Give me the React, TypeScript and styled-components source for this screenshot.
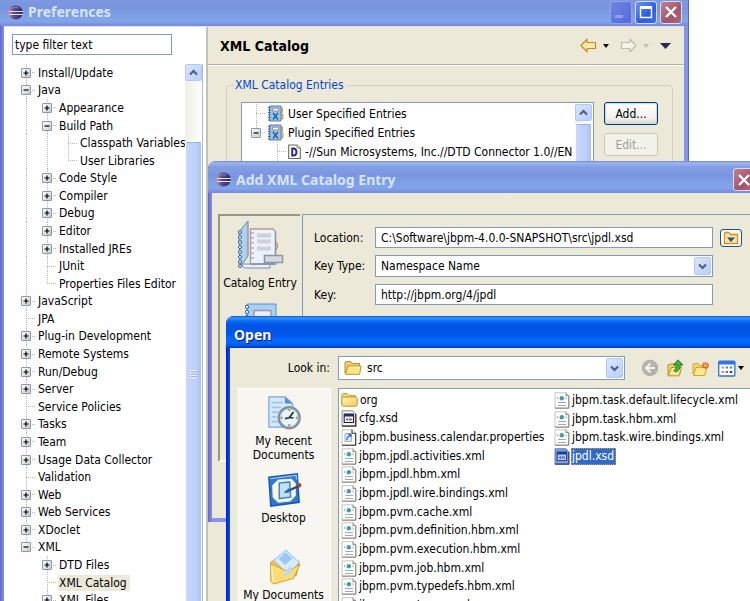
import React from "react";
import styled, { createGlobalStyle, css } from "styled-components";

const face = "#ece9d8";
const edge = "#7f9db9";
const dots = "#bdb8a6";
const uiFont = `"DejaVu Sans Condensed", "Noto Sans", sans-serif`;
const titleFont = `"Noto Sans", "Open Sans", sans-serif`;

const GlobalStyle = createGlobalStyle`
  *, *::before, *::after { box-sizing: border-box; }
  body { margin: 0; background: #fff; overflow: hidden; }
  body, button, input, select { font: 12px/16px ${uiFont}; color: #000; }
  h1, h2, ul, fieldset { margin: 0; padding: 0; }
  ul { list-style: none; }
  button { padding: 0; border: 0; background: none; }
  svg { display: block; flex: none; }
`;

/* ---------- window chrome ---------- */

const Desktop = styled.div`
  position: relative;
  height: 100vh;
  overflow: hidden;
`;

const Window = styled.section<{ $active?: boolean }>`
  position: absolute;
  display: flex;
  flex-direction: column;
  border-radius: 8px 8px 0 0;
  overflow: hidden;
  background: ${(p) =>
    p.$active
      ? "linear-gradient(90deg, #0019cf, #0855dd 4px)"
      : "linear-gradient(90deg, #5f68cc, #8494e6 4px)"};
`;

const PreferencesFrame = styled(Window)`
  inset: 0 61px -8px 0;
  padding: 0 4px 0 4px;
  border-radius: 0;
  border-right: 1px solid #5a62c4;
`;

const EntryFrame = styled(Window)`
  inset: 161px -13px 79px 208px;
  padding: 0 4px 4px;
`;

const OpenFrame = styled(Window)`
  inset: 316px -60px -120px 226px;
  padding: 0 4px 4px;
`;

const TitleBar = styled.header<{ $active?: boolean; $cut?: boolean }>`
  display: flex;
  align-items: center;
  gap: 5px;
  flex: none;
  height: ${(p) => (p.$cut ? 26 : 32)}px;
  margin: 0 -4px;
  padding: ${(p) => (p.$cut ? "0 6px 2px 8px" : "5px 8px 0 8px")};
  background: ${(p) =>
    p.$active
      ? "linear-gradient(#0058e0, #3c95ff 2px, #0a6cf4 5px, #0053e4 9px, #0056ea 18px, #0068ff 24px, #0066fc 28px, #0038c4)"
      : p.$cut
        ? "linear-gradient(#7e97e0, #7a95df 8px, #82a6ea 21px, #7f9ae5 23px, #7788da)"
        : "linear-gradient(#7287da, #9cb6ec 2px, #829fe4 6px, #7a95df 14px, #82a6ea 27px, #7f9ae5 29px, #7788da)"};
`;

const WindowTitle = styled.h1<{ $active?: boolean }>`
  flex: 1;
  font: bold 14px/20px ${titleFont};
  color: ${(p) => (p.$active ? "#fff" : "#d8e4f8")};
  text-shadow: ${(p) => (p.$active ? "1px 1px 0 #0f1089" : "none")};
`;

const CaptionButtons = styled.div`
  display: flex;
  gap: 3px;
`;

const captionFill = {
  min: "linear-gradient(135deg, #6f86e2, #5468d8)",
  max: "linear-gradient(135deg, #6c95f0, #2d5be0 60%, #3f72ee)",
  close: "linear-gradient(135deg, #bf8390, #a4556a 60%, #b0687a)",
};

const CaptionButton = styled.button<{ $kind: keyof typeof captionFill }>`
  width: 22px;
  height: 23px;
  border: 1px solid ${(p) => (p.$kind === "min" ? "#8ea2ea" : "#d2dcf8")};
  border-radius: 3px;
  background: ${(p) => captionFill[p.$kind]};
  svg { margin: auto; }
`;

/* ---------- shared controls ---------- */

const TextField = styled.input`
  display: block;
  width: 100%;
  height: 21px;
  padding: 0 5px;
  border: 1px solid ${edge};
  background: #fff;
  outline: 0;
`;

const Combo = styled.div<{ $tall?: boolean }>`
  display: flex;
  align-items: center;
  gap: 5px;
  height: ${(p) => (p.$tall ? 24 : 22)}px;
  padding: 1px 1px 1px 5px;
  border: 1px solid ${edge};
  background: #fff;
`;

const ComboSelect = styled.select`
  flex: 1;
  min-width: 0;
  padding: 0;
  border: 0;
  appearance: none;
  background: none;
  outline: 0;
`;

const xpBlue = css`
  border: 1px solid #b4c8f6;
  border-radius: 2px;
  background: linear-gradient(135deg, #dbe5fd, #bacdfb);
`;

const ComboArrow = styled.span`
  ${xpBlue}
  display: grid;
  place-items: center;
  align-self: stretch;
  width: 17px;
`;

const PushButton = styled.button`
  width: 54px;
  height: 23px;
  border: 1px solid #003c74;
  border-radius: 3px;
  background: linear-gradient(#fff, #f3f2ec 70%, #dcd8cc);
  box-shadow: inset 0 0 1px 1px #c8d8f0;
  &:disabled {
    color: #a1a192;
    border-color: #c9c7ba;
    background: #f3f2ea;
    box-shadow: none;
  }
`;

const ScrollTrack = styled.div`
  display: flex;
  flex-direction: column;
  flex: none;
  gap: 1px;
  width: 17px;
  background: linear-gradient(90deg, #f0efe8, #fdfdfb);
`;

const ScrollButton = styled.button`
  ${xpBlue}
  display: grid;
  place-items: center;
  height: 17px;
  flex: none;
`;

const ScrollThumb = styled.div<{ $offset?: boolean }>`
  display: grid;
  justify-items: center;
  align-content: start;
  flex: 1;
  margin-top: ${(p) => (p.$offset ? 59 : 1)}px;
  padding-top: ${(p) => (p.$offset ? 228 : 0)}px;
  border: 1px solid #fff;
  border-radius: 2px;
  background: linear-gradient(90deg, #c8d8fd, #bccffc 70%, #aabff0);
  box-shadow: inset 0 1px 0 #98b0e8;
`;

/* ---------- preferences ---------- */

const PreferencesBody = styled.div`
  display: grid;
  grid-template-columns: 204px 1fr;
  flex: 1;
  min-height: 0;
  background: ${face};
  border-top: 1px solid #dfe0e8;
`;

const NavPane = styled.nav`
  display: flex;
  flex-direction: column;
  gap: 9px;
  padding: 7px 3px 0 8px;
  min-height: 0;
  background: #fff;
  border-right: 2px solid #c5c2b4;
`;

const FilterBox = styled.div`
  width: 160px;
  input { padding: 0 2px; }
`;

const NavScroller = styled.div`
  display: flex;
  flex: 1;
  min-height: 0;
  border-right: 1px solid #a9bbdc;
`;

const Tree = styled.ul`
  display: grid;
  grid-auto-rows: 1fr;
  flex: 1;
  min-width: 0;
  height: 545px;
  padding-left: 4px;
`;

const TreeRow = styled.li`
  display: flex;
  align-items: center;
  white-space: nowrap;
`;

const Guide = styled.span<{ $kind: string }>`
  display: flex;
  align-items: center;
  align-self: stretch;
  flex: none;
  width: 21px;
  padding-left: 5px;
  background-image: repeating-linear-gradient(${dots} 0 1px, transparent 1px 2px),
    repeating-linear-gradient(90deg, ${dots} 0 1px, transparent 1px 2px);
  background-position: 10px 0, 10px 50%;
  background-repeat: no-repeat;
  background-size: ${({ $kind }) =>
    $kind === "none"
      ? "0 0, 0 0"
      : $kind === "line"
        ? "1px 100%, 0 0"
        : $kind === "end"
          ? "1px 50%, 10px 1px"
          : "1px 100%, 10px 1px"};
`;

const Toggle = styled.button`
  width: 10px;
  height: 10px;
  border: 1px solid #7b9cc0;
  border-radius: 1px;
  background: linear-gradient(135deg, #fff, #cfcabb);
`;

const TreeLabel = styled.span<{ $selected?: boolean }>`
  padding: 0 ${(p) => (p.$selected ? 3 : 0)}px 0 1px;
  background: ${(p) => (p.$selected ? face : "transparent")};
`;

const PrefPage = styled.main`
  min-width: 0;
`;

const PageHeader = styled.header`
  display: flex;
  align-items: center;
  gap: 11px;
  height: 38px;
  padding: 0 13px 0 12px;
  border-bottom: 1px solid #b5b2a2;
  box-shadow: 0 1px 0 #fff;
`;

const PageTitle = styled.h2`
  flex: 1;
  font: bold 14px/18px ${uiFont};
`;

const PageTool = styled.button`
  display: flex;
  align-items: center;
  gap: 6px;
`;

const EntryGroup = styled.fieldset`
  display: flex;
  gap: 10px;
  min-width: 0;
  height: 190px;
  margin: 12px 11px 0 18px;
  padding: 9px 14px 0;
  border: 1px solid #d0d0bf;
  border-radius: 4px;
  legend {
    margin-left: -7px;
    padding: 0 3px 0 1px;
    color: #0046d5;
  }
`;

const EntryList = styled.div`
  display: flex;
  flex: 1;
  min-width: 0;
  padding: 1px;
  border: 1px solid ${edge};
  background: #fff;
`;

const EntryRows = styled.ul`
  flex: 1;
  min-width: 0;
  overflow: hidden;
  padding-left: 3px;
`;

const EntryRow = styled(TreeRow)`
  height: 19px;
  svg { margin-right: 4px; }
  button svg { margin-right: 0; }
`;

const ButtonStack = styled.div`
  display: flex;
  flex-direction: column;
  gap: 8px;
`;

/* ---------- add entry dialog ---------- */

const EntryBody = styled.div`
  display: grid;
  grid-template-columns: 84px 1fr;
  flex: 1;
  padding: 21px 0 56px 6px;
  background: ${face};
`;

const KindBar = styled.div`
  display: flex;
  flex-direction: column;
  align-items: center;
  gap: 12px;
  padding-top: 4px;
  margin-right: 2px;
  border: 2px solid #9a9786;
  border-right: 0;
  border-bottom-color: #fff;
`;

const KindButton = styled.button`
  display: flex;
  flex-direction: column;
  align-items: center;
  gap: 5px;
  white-space: nowrap;
`;

const EntryForm = styled.form`
  display: grid;
  grid-template-columns: 54px minmax(0, 1fr) 39px;
  grid-template-rows: 21px 22px 21px;
  align-content: start;
  align-items: center;
  gap: 7px;
  padding: 12px 0 0 11px;
  border: 1px solid ${edge};
  border-right: 0;
  label { white-space: nowrap; }
`;

const BrowseButton = styled.button`
  display: grid;
  place-items: center;
  width: 22px;
  height: 18px;
  border: 1px solid #1d5281;
  border-radius: 3px;
  background: #fbf8ee;
`;

/* ---------- open dialog ---------- */

const OpenBody = styled.div`
  flex: 1;
  background: ${face};
  padding: 8px 0 0 7px;
`;

const LookRow = styled.div`
  display: grid;
  grid-template-columns: 93px minmax(0, 287px) auto;
  align-items: center;
  gap: 8px;
  label { text-align: right; }
`;

const LookTools = styled.div`
  display: flex;
  align-items: center;
  gap: 8px;
  padding-left: 8px;
`;

const ViewButton = styled.button`
  display: flex;
  align-items: center;
  gap: 2px;
`;

const OpenColumns = styled.div`
  display: grid;
  grid-template-columns: 94px 1fr;
  gap: 7px;
  height: 300px;
  margin-top: 8px;
`;

const Places = styled.nav`
  display: flex;
  flex-direction: column;
  align-items: center;
  gap: 9px;
  padding-top: 5px;
  border-top: 1px solid #fff;
  border-right: 1px solid #fff;
  background: #f7f6f1;
`;

const Place = styled.button`
  display: flex;
  flex-direction: column;
  align-items: center;
  gap: 2px;
  width: 86px;
  min-height: 68px;
  line-height: 14px;
`;

const FileArea = styled.div`
  display: grid;
  grid-template-columns: 213px 1fr;
  align-items: start;
  padding: 2px;
  border: 1px solid ${edge};
  background: #fff;
`;

const FileColumn = styled.ul<{ $rows: number }>`
  display: grid;
  grid-auto-rows: 1fr;
  height: ${(p) => Math.round(p.$rows * 18.7)}px;
`;

const FileRow = styled.li<{ $selected?: boolean }>`
  display: flex;
  align-items: center;
  gap: 1px;
  white-space: nowrap;
  span {
    padding: 0 2px 0 1px;
    line-height: 17px;
    color: ${(p) => (p.$selected ? "#fff" : "#000")};
    background: ${(p) => (p.$selected ? "#316ac5" : "transparent")};
    outline: ${(p) => (p.$selected ? "1px dotted #d79a4a" : "0")};
    outline-offset: -1px;
  }
`;

/* ---------- icons ---------- */

const Chevron = ({ up }: { up?: boolean }) => (
  <svg width="9" height="7" viewBox="0 0 9 7">
    <path d={up ? "M1 5.5 4.5 2 8 5.5" : "M1 1.5 4.5 5 8 1.5"} fill="none" stroke="#4d6185" strokeWidth="2.2" />
  </svg>
);

const Caret = ({ color = "#000", wide }: { color?: string; wide?: boolean }) => (
  <svg width={wide ? 11 : 6} height={wide ? 6 : 4} viewBox="0 0 6 4" preserveAspectRatio="none">
    <path d="M0 0H6L3 4Z" fill={color} />
  </svg>
);

const EclipseIcon = () => (
  <svg width="15" height="15" viewBox="0 0 15 15">
    <defs>
      <linearGradient id="ecl" x1="0" x2="1">
        <stop offset="0" stopColor="#d592a6" />
        <stop offset=".35" stopColor="#5f4f92" />
        <stop offset="1" stopColor="#2b2462" />
      </linearGradient>
    </defs>
    <ellipse cx="7.5" cy="7.5" rx="7.3" ry="7" fill="url(#ecl)" />
    <path d="M1 6.5H15M1 9.5H15" stroke="#dfe3f7" />
    <path d="M4 3.6Q7 1.2 10.5 3" stroke="#9b8cc2" fill="none" />
  </svg>
);

const CrossIcon = () => (
  <svg width="14" height="14" viewBox="0 0 14 14">
    <path d="M2 2 12 12M12 2 2 12" stroke="#fff" strokeWidth="2.4" />
  </svg>
);

const MaxIcon = () => (
  <svg width="14" height="14" viewBox="0 0 14 14">
    <path d="M1.5 2.5H12.5V12.5H1.5Z" fill="none" stroke="#fff" strokeWidth="1.4" />
    <path d="M1 2.5H13" stroke="#fff" strokeWidth="3" />
  </svg>
);

const MinIcon = () => (
  <svg width="14" height="14" viewBox="0 0 14 14">
    <path d="M1 10H9V13H1Z" fill="#93a0ec" />
  </svg>
);

const ArrowIcon = ({ off }: { off?: boolean }) => (
  <svg width="17" height="15" viewBox="0 0 17 15">
    <path
      d={off ? "M16 7.5 10 1.2V4.5H1.5V10.5H10V13.8Z" : "M1 7.5 7 1.2V4.5H15.5V10.5H7V13.8Z"}
      fill={off ? "#f2f1ea" : "#fde9a6"}
      stroke={off ? "#bebdb2" : "#c28a22"}
      strokeWidth="1.2"
      strokeLinejoin="round"
    />
  </svg>
);

const SignIcon = ({ plus }: { plus?: boolean }) => (
  <svg width="8" height="8" viewBox="0 0 8 8">
    <path d={plus ? "M1.5 4H6.5M4 1.5V6.5" : "M1.5 4H6.5"} stroke="#000" strokeWidth="1.2" />
  </svg>
);

const CatalogIcon = () => (
  <svg width="17" height="17" viewBox="0 0 17 17">
    <path d="M13.5 3H15.5V7.5H13.5ZM13.5 9H16V14H13.5Z" fill="#f0c568" stroke="#b08a3c" strokeWidth=".7" />
    <path d="M2.5 1H14V16H2.5Z" fill="#92c5ee" stroke="#5a7fae" />
    <path d="M5.5 3.2H11.8V6H5.5Z" fill="#eef6ff" stroke="#a07f96" strokeWidth=".9" />
    <path d="M6 8 11 14.5M11 8 6 14.5" stroke="#2d5f9b" strokeWidth="1.5" />
    <path d="M1 2.5H3.5M1 5H3.5M1 7.5H3.5M1 10H3.5M1 12.5H3.5M1 15H3.5" stroke="#42618c" />
  </svg>
);

const DtdIcon = () => (
  <svg width="13" height="16" viewBox="0 0 13 16">
    <path d="M.7 1H9L12.3 4V14.5H.7Z" fill="#fffef4" stroke="#6f6a58" strokeWidth="1.1" />
    <path d="M9 1V4H12.3" fill="#f2d98e" stroke="#8d8363" strokeWidth=".8" />
    <path d="M4.2 4.5V11.5H5.5C9.5 11.5 9.5 4.5 5.5 4.5Z" fill="none" stroke="#282a8c" strokeWidth="1.9" />
  </svg>
);

const CatalogEntryIcon = () => (
  <svg width="48" height="50" viewBox="0 0 48 50">
    <path d="M35 20 39 21Q44 25 40 30L35 33Z" fill="#f9c95c" stroke="#b88f54" />
    <path d="M5 44H34V48H8Z" fill="#e9f2fb" stroke="#6a93c2" />
    <path d="M3 12 12 1V36L4 47Z" fill="#a8d4f4" stroke="#6c82a4" />
    <path d="M11.5 3.5V36" stroke="#b99aa8" strokeWidth="1.4" />
    <path d="M14.5 9H37L39.5 11.5V44H14.5Z" fill="#edf1fa" stroke="#b597a8" strokeWidth="1.3" />
    <path d="M39.5 12V44H14.5" fill="none" stroke="#7f93bb" strokeWidth="1.4" />
    <path d="M21 15.5H35M21 21.5H35M21 28.5H35" stroke="#cdd2d9" strokeWidth="4" />
    <path d="M15 13H18M15 18H18M15 23H18M15 28H18M15 33H18M15 38H18" stroke="#7b93b4" />
    <path d="M28.5 35.5H46.5V42.5H28.5Z" fill="#d3dbdf" stroke="#8d97a2" strokeWidth="1.5" />
    {[12, 17, 22, 27, 32, 37, 42, 46].map((y) => (
      <circle key={y} cx="4" cy={y} r="1.6" fill="#dcecfb" stroke="#3f6690" />
    ))}
  </svg>
);

const NextCatalogIcon = () => (
  <svg width="34" height="34" viewBox="0 0 34 34">
    <path d="M4 1H33V33H4Z" fill="#a3d2f5" stroke="#5d8fc0" />
    <path d="M11 7.5H28V20H11Z" fill="#e5f0fb" stroke="#a78fa3" strokeWidth="1.4" />
    {[4, 9, 14, 19, 24, 29].map((y) => (
      <circle key={y} cx="4" cy={y} r="1.7" fill="#dcecfb" stroke="#3f6690" />
    ))}
  </svg>
);

const FolderIcon = () => (
  <svg width="18" height="16" viewBox="0 0 18 16">
    <path d="M1 13V3Q1 1.5 2.5 1.5H6.5L8.3 3.5H15.5V13Z" fill="#f3cd62" stroke="#b98c2b" />
    <path d="M1.4 14.3 4 6H17.2L15.6 14.3Z" fill="#fde58a" stroke="#c0942f" />
    <path d="M5 7.3H15.7" stroke="#fff8cf" />
  </svg>
);

const ClosedFolderIcon = () => (
  <svg width="17" height="16" viewBox="0 0 17 16">
    <defs>
      <linearGradient id="fold" x1="0" y1="0" x2="1" y2="1">
        <stop offset="0" stopColor="#fff6b8" />
        <stop offset="1" stopColor="#f4cb5a" />
      </linearGradient>
    </defs>
    <path d="M.8 12.5V3Q.8 1.5 2.3 1.5H6L7.8 3.5H14.5V7Z" fill="#f6d468" stroke="#d0a23a" />
    <path d="M.8 13V6.5Q.8 5 2.3 5H14.7Q16.2 5 16.2 6.5V12.5Q16.2 14.2 14.7 14.2H2.3Q.8 14.2 .8 13Z" fill="url(#fold)" stroke="#c2912f" />
  </svg>
);

const BrowseIcon = () => (
  <svg width="16" height="14" viewBox="0 0 16 14">
    <path d="M1.5 12.5V3Q1.5 1.5 3 1.5H6L7.5 3.5H14.5V12.5Z" fill="#fbe3a5" stroke="#d1932f" strokeWidth="1.3" />
    <path d="M4 6.5H12L8 11Z" fill="#23597e" />
  </svg>
);

const BackDisc = () => (
  <svg width="18" height="18" viewBox="0 0 18 18">
    <circle cx="9" cy="9" r="8.2" fill="#b4b3ab" />
    <path d="M9.5 4.5 5 9 9.5 13.5M5.5 9H14" fill="none" stroke="#f3f2ec" strokeWidth="2.2" />
  </svg>
);

const UpFolderIcon = () => (
  <svg width="17" height="18" viewBox="0 0 17 18">
    <path d="M1 16V6L6 4.5 7 6H13V15Z" fill="#f1ce62" stroke="#b8902e" />
    <path d="M1.2 16.8 4.5 8.5H14.5L12 16.8Z" fill="#fde88f" stroke="#b8902e" />
    <path d="M8.5 13Q13.8 11 13 6H16L11 .8 6.3 6H9.4Q10 9.5 7 11.5Z" fill="#42b03c" stroke="#1e7625" strokeWidth=".9" />
  </svg>
);

const NewFolderIcon = () => (
  <svg width="18" height="17" viewBox="0 0 18 17">
    <path d="M1 14V5Q1 3.5 2.5 3.5H6L7.5 5.5H13V14Z" fill="#f5d268" stroke="#d3a43c" />
    <path d="M1.5 15.5 4 7.5H15L12.5 15.5Z" fill="#fde88f" stroke="#d3a43c" />
    <path d="M13.5 2V9M10 5.5H17M11 3 16 8M16 3 11 8" stroke="#e8522f" strokeWidth="1.3" />
    <circle cx="13.5" cy="5.5" r="1.6" fill="#ffc44a" />
  </svg>
);

const ViewIcon = () => (
  <svg width="18" height="17" viewBox="0 0 18 17">
    <rect x=".7" y="1.2" width="16.2" height="14.8" rx="1" fill="#fff" stroke="#2f6fd6" strokeWidth="1.3" />
    <path d="M1 2.7H17" stroke="#2f74e8" strokeWidth="3.4" />
    <path d="M3.5 7.5H6M3.5 12H6" stroke="#a39ba8" strokeWidth="2.2" />
    <path d="M7.6 7.5H10.1" stroke="#6d74d8" strokeWidth="2.2" />
    <path d="M7.6 12H10.1" stroke="#d14a38" strokeWidth="2.2" />
    <path d="M11.7 7.5H14.2" stroke="#44a257" strokeWidth="2.2" />
    <path d="M11.7 12H14.2" stroke="#2c3c9c" strokeWidth="2.2" />
  </svg>
);

const XmlFileIcon = () => (
  <svg width="16" height="17" viewBox="0 0 16 17">
    <path d="M1 .8H12L14.8 3.6V16H1Z" fill="#fff" stroke="#c6c5b9" />
    <path d="M12 .8V3.6H14.8M14.8 4V16.2H1" fill="none" stroke="#84837a" />
    <circle cx="7.8" cy="6.2" r="2.2" fill="#3aa39b" />
    <path d="M4.2 5 3 6.2 4.2 7.4M11.4 5 12.6 6.2 11.4 7.4" fill="none" stroke="#8890a8" strokeWidth=".9" />
    <path d="M4 10.5H12M4 13.5H12" stroke="#a4a6b4" />
  </svg>
);

const XsdFileIcon = ({ selected }: { selected?: boolean }) => (
  <svg width="16" height="17" viewBox="0 0 16 17">
    <path d="M1 .8H12L14.8 3.6V16H1Z" fill={selected ? "#7f9fd6" : "#fbf6df"} stroke={selected ? "#5d7fb8" : "#8c887a"} />
    <path d="M14.8 4V16.2H1" fill="none" stroke={selected ? "#2a4680" : "#33312c"} strokeWidth="1.2" />
    <path d="M3.2 4H12.6V12.5H3.2Z" fill={selected ? "#b4cbf2" : "#fff"} stroke={selected ? "#2849a0" : "#14203f"} strokeWidth="1.1" />
    <path d="M3 5.2H12.8" stroke={selected ? "#1d3f9a" : "#1b2c78"} strokeWidth="2.6" />
    <path d="M4.6 9.5 6.8 7.9V11.1Z" fill="#3d4fe0" />
    <path d="M7.6 8.6H9V10.4H7.6Z" fill="#2d8b5c" />
    <path d="M9.4 7.9 11.6 9.5 9.4 11.1Z" fill="#cf3030" />
  </svg>
);

const PropsFileIcon = () => (
  <svg width="16" height="17" viewBox="0 0 16 17">
    <path d="M1 .8H11.5L14.5 4V16H1Z" fill="#fffef8" stroke="#c4c2b6" />
    <path d="M11 .8V4.2H14.5M14.7 4V16.2H1" fill="none" stroke="#33312c" strokeWidth="1.1" />
    <path d="M4 4.5H10.5V12.5H4Z" fill="#dbe8fa" stroke="#9db2d8" />
    <path d="M6 11Q5.5 8 9.5 6M7 5 10 5.5 9.3 8" fill="none" stroke="#3367b5" strokeWidth="1.2" />
  </svg>
);

const RecentIcon = () => (
  <svg width="36" height="38" viewBox="0 0 38 38">
    <path d="M3 2H20L28 9V34H3Z" fill="#d5e8fc" stroke="#7ba5e0" strokeWidth="1.3" />
    <path d="M20 2V9H28Z" fill="#4f8fe2" />
    <path d="M6 8H18M6 13H16M6 18H13M6 23H11M6 28H13" stroke="#9cc4ee" strokeWidth="1.8" />
    <circle cx="24.5" cy="24" r="11" fill="#dcecf5" stroke="#8290a0" strokeWidth="2.6" />
    <circle cx="24.5" cy="24" r="9.3" fill="#e4f6fb" stroke="#b5cfdc" />
    <path d="M24.5 15V17M24.5 31V33M15.5 24H17.5M31.5 24H33.5" stroke="#e86a43" strokeWidth="2" />
    <path d="M29 18 24.5 24H29M24.5 24 20 25" fill="none" stroke="#26313f" strokeWidth="1.8" />
  </svg>
);

const DesktopIcon = () => (
  <svg width="36" height="38" viewBox="0 0 38 38">
    <path d="M3 5.5 33 2 35 32 5 36Z" fill="#2f78cf" stroke="#1a57a6" strokeWidth="1.5" />
    <path d="M4.5 7 32 3.5 32.3 8" fill="none" stroke="#8fc0f0" strokeWidth="1.5" />
    <path d="M7 14 13 8.5 27 7.5 31 12V25L26 30.5 13 32 7.5 27Z" fill="#fdf6d8" stroke="#dfe9ee" />
    <path d="M14 11.5 25 10.5 26 26.5 14 28Z" fill="#c4e1fc" stroke="#3b8ad8" strokeWidth="1.6" />
    <path d="M20 21.5 34 15" stroke="#1c4a7e" strokeWidth="2.2" />
    <path d="M19 22 24 17 25.5 21.5Z" fill="#2a6faa" />
    <circle cx="35" cy="14" r="2.3" fill="#b8402f" />
  </svg>
);

const DocumentsIcon = () => (
  <svg width="36" height="38" viewBox="0 0 38 38">
    <path d="M5 14 10 11 14 14 35 13 32 28 6 35Z" fill="#f1c252" stroke="#d4a13c" />
    <path d="M8 12 21 1 35 14 24 27Z" fill="#d8ecfd" stroke="#8db8e6" />
    <path d="M13 10 21 3.5 28 10 20 17Z" fill="#9cc9f4" />
    <path d="M5 15.5 19 22 24 23 36 16 29 31 8 37 5 34Z" fill="#fddc72" stroke="#cb9d38" />
    <path d="M18 27 25 18 28 22 22 29Z" fill="#b9dcf6" />
    <path d="M6 17.5 7.5 34" stroke="#fff3bd" strokeWidth="1.5" />
  </svg>
);

const Grip = () => (
  <svg width="8" height="9" viewBox="0 0 8 9">
    <path d="M0 .5H7M0 3H7M0 5.5H7M0 8H7" stroke="#eef4fe" />
    <path d="M1 1.5H8M1 4H8M1 6.5H8" stroke="#93ade8" strokeWidth=".7" />
  </svg>
);

/* ---------- content ---------- */

// Each entry: guide codes per level, then the label.
// | continuing line, _ blank, + collapsed, - expanded, x last expanded,
// t leaf, e last leaf
const treeRows: [string, string][] = [
  ["+", "Install/Update"],
  ["-", "Java"],
  ["|+", "Appearance"],
  ["|-", "Build Path"],
  ["||t", "Classpath Variables"],
  ["||e", "User Libraries"],
  ["|+", "Code Style"],
  ["|+", "Compiler"],
  ["|+", "Debug"],
  ["|+", "Editor"],
  ["|+", "Installed JREs"],
  ["|t", "JUnit"],
  ["|e", "Properties Files Editor"],
  ["+", "JavaScript"],
  ["t", "JPA"],
  ["+", "Plug-in Development"],
  ["+", "Remote Systems"],
  ["+", "Run/Debug"],
  ["+", "Server"],
  ["t", "Service Policies"],
  ["+", "Tasks"],
  ["+", "Team"],
  ["+", "Usage Data Collector"],
  ["t", "Validation"],
  ["+", "Web"],
  ["+", "Web Services"],
  ["+", "XDoclet"],
  ["x", "XML"],
  ["_+", "DTD Files"],
  ["_t", "XML Catalog"],
  ["_+", "XML Files"],
];

const guideKinds: Record<string, string> = {
  "|": "line", _: "none", "+": "tee", "-": "tee", t: "tee", e: "end", x: "end",
};

const Guides = ({ codes, label }: { codes: string; label: string }) => (
  <>
    {codes.split("").map((c, i) => (
      <Guide key={i} $kind={guideKinds[c]}>
        {"+-x".includes(c) && (
          <Toggle type="button" aria-label={`${c === "+" ? "Expand" : "Collapse"} ${label}`}>
            <SignIcon plus={c === "+"} />
          </Toggle>
        )}
      </Guide>
    ))}
  </>
);

type FileKind = "folder" | "xsd" | "props" | "xml";

const leftFiles: [FileKind, string][] = [
  ["folder", "org"],
  ["xsd", "cfg.xsd"],
  ["props", "jbpm.business.calendar.properties"],
  ["xml", "jbpm.jpdl.activities.xml"],
  ["xml", "jbpm.jpdl.hbm.xml"],
  ["xml", "jbpm.jpdl.wire.bindings.xml"],
  ["xml", "jbpm.pvm.cache.xml"],
  ["xml", "jbpm.pvm.definition.hbm.xml"],
  ["xml", "jbpm.pvm.execution.hbm.xml"],
  ["xml", "jbpm.pvm.job.hbm.xml"],
  ["xml", "jbpm.pvm.typedefs.hbm.xml"],
  ["xml", "jbpm.pvm.types.xml"],
];

const rightFiles: [FileKind, string][] = [
  ["xml", "jbpm.task.default.lifecycle.xml"],
  ["xml", "jbpm.task.hbm.xml"],
  ["xml", "jbpm.task.wire.bindings.xml"],
  ["xsd", "jpdl.xsd"],
];

const Files = ({ items, selected }: { items: [FileKind, string][]; selected?: string }) => (
  <FileColumn $rows={items.length}>
    {items.map(([kind, name]) => (
      <FileRow key={name} $selected={name === selected}>
        {kind === "folder" && <ClosedFolderIcon />}
        {kind === "xsd" && <XsdFileIcon selected={name === selected} />}
        {kind === "props" && <PropsFileIcon />}
        {kind === "xml" && <XmlFileIcon />}
        <span>{name}</span>
      </FileRow>
    ))}
  </FileColumn>
);

const PreferencesWindow = () => (
  <PreferencesFrame>
    <TitleBar $cut>
      <EclipseIcon />
      <WindowTitle>Preferences</WindowTitle>
      <CaptionButtons>
        <CaptionButton $kind="min" aria-label="Minimize"><MinIcon /></CaptionButton>
        <CaptionButton $kind="max" aria-label="Maximize"><MaxIcon /></CaptionButton>
        <CaptionButton $kind="close" aria-label="Close Preferences"><CrossIcon /></CaptionButton>
      </CaptionButtons>
    </TitleBar>
    <PreferencesBody>
      <NavPane>
        <FilterBox>
          <TextField aria-label="Filter" defaultValue="type filter text" />
        </FilterBox>
        <NavScroller>
          <Tree>
            {treeRows.map(([codes, label]) => (
              <TreeRow key={label}>
                <Guides codes={codes} label={label} />
                <TreeLabel $selected={label === "XML Catalog"}>{label}</TreeLabel>
              </TreeRow>
            ))}
          </Tree>
          <ScrollTrack>
            <ScrollButton aria-label="Scroll tree up"><Chevron up /></ScrollButton>
            <ScrollThumb $offset><Grip /></ScrollThumb>
          </ScrollTrack>
        </NavScroller>
      </NavPane>
      <PrefPage>
        <PageHeader>
          <PageTitle>XML Catalog</PageTitle>
          <PageTool aria-label="Back"><ArrowIcon /><Caret /></PageTool>
          <PageTool aria-label="Forward" disabled><ArrowIcon off /><Caret color="#c3c1b4" /></PageTool>
          <PageTool aria-label="Menu"><Caret wide color="#2d2858" /></PageTool>
        </PageHeader>
        <EntryGroup>
          <legend>XML Catalog Entries</legend>
          <EntryList>
            <EntryRows>
              <EntryRow>
                <Guides codes="t" label="" />
                <CatalogIcon />User Specified Entries
              </EntryRow>
              <EntryRow>
                <Guides codes="x" label="Plugin Specified Entries" />
                <CatalogIcon />Plugin Specified Entries
              </EntryRow>
              <EntryRow>
                <Guides codes="_t" label="" />
                <DtdIcon />-//Sun Microsystems, Inc.//DTD Connector 1.0//EN
              </EntryRow>
            </EntryRows>
            <ScrollTrack>
              <ScrollButton aria-label="Scroll entries up"><Chevron up /></ScrollButton>
              <ScrollThumb />
            </ScrollTrack>
          </EntryList>
          <ButtonStack>
            <PushButton>Add...</PushButton>
            <PushButton disabled>Edit...</PushButton>
          </ButtonStack>
        </EntryGroup>
      </PrefPage>
    </PreferencesBody>
  </PreferencesFrame>
);

const EntryDialog = () => (
  <EntryFrame>
    <TitleBar>
      <EclipseIcon />
      <WindowTitle>Add XML Catalog Entry</WindowTitle>
      <CaptionButton $kind="close" aria-label="Close Add XML Catalog Entry"><CrossIcon /></CaptionButton>
    </TitleBar>
    <EntryBody>
      <KindBar>
        <KindButton><CatalogEntryIcon />Catalog Entry</KindButton>
        <KindButton><NextCatalogIcon />Next Catalog</KindButton>
      </KindBar>
      <EntryForm>
        <label htmlFor="location">Location:</label>
        <TextField id="location" defaultValue="C:\Software\jbpm-4.0.0-SNAPSHOT\src\jpdl.xsd" />
        <BrowseButton type="button" aria-label="Browse"><BrowseIcon /></BrowseButton>
        <label htmlFor="keytype">Key Type:</label>
        <Combo>
          <ComboSelect id="keytype" defaultValue="ns">
            <option value="ns">Namespace Name</option>
          </ComboSelect>
          <ComboArrow><Chevron /></ComboArrow>
        </Combo>
        <span />
        <label htmlFor="key">Key:</label>
        <TextField id="key" defaultValue="http://jbpm.org/4/jpdl" />
      </EntryForm>
    </EntryBody>
  </EntryFrame>
);

const OpenDialog = () => (
  <OpenFrame $active>
    <TitleBar $active>
      <WindowTitle $active>Open</WindowTitle>
    </TitleBar>
    <OpenBody>
      <LookRow>
        <label htmlFor="lookin">Look in:</label>
        <Combo $tall>
          <FolderIcon />
          <ComboSelect id="lookin" defaultValue="src">
            <option value="src">src</option>
          </ComboSelect>
          <ComboArrow><Chevron /></ComboArrow>
        </Combo>
        <LookTools>
          <button aria-label="Go back" disabled><BackDisc /></button>
          <button aria-label="Up one level"><UpFolderIcon /></button>
          <button aria-label="New folder"><NewFolderIcon /></button>
          <ViewButton aria-label="View"><ViewIcon /><Caret /></ViewButton>
        </LookTools>
      </LookRow>
      <OpenColumns>
        <Places>
          <Place><RecentIcon />My Recent Documents</Place>
          <Place><DesktopIcon />Desktop</Place>
          <Place><DocumentsIcon />My Documents</Place>
        </Places>
        <FileArea>
          <Files items={leftFiles} />
          <Files items={rightFiles} selected="jpdl.xsd" />
        </FileArea>
      </OpenColumns>
    </OpenBody>
  </OpenFrame>
);

export default function App() {
  return (
    <>
      <GlobalStyle />
      <Desktop>
        <PreferencesWindow />
        <EntryDialog />
        <OpenDialog />
      </Desktop>
    </>
  );
}
